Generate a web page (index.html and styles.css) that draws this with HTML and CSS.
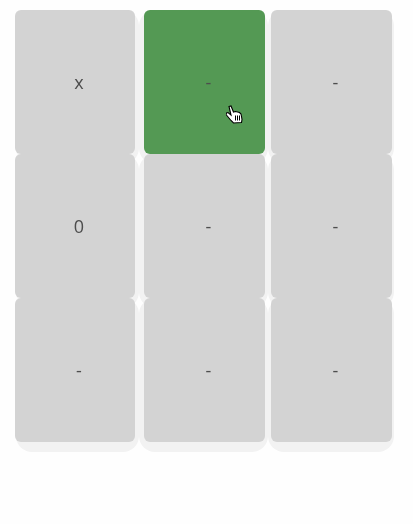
FILE: index.html
```html
<!DOCTYPE html>
<html lang="en">
<head>
  <meta charset="UTF-8" />
  <title>Tic Tac Toe</title>
  <link rel="stylesheet" href="styles.css">
</head>
<body>
  <div class="board">
    <div class="cell"><span class="mark">x</span></div>
    <div class="cell active"><span class="mark">-</span>
      <svg class="cursor" width="18" height="19" viewBox="0 0 18 19">
        <path d="M3 1.500l2-.5 2.500 6 2-.5 2 .5 2 .5 1.500 1.500.5 2.500.5 3-.5 3-8 .5-2.500-2.500-5-6 .5-1.500 1.500-.5 3 2.500z" fill="#fff" stroke="#000" stroke-width="1.100"/>
        <path d="M9.500 10.500v5M11.500 10.500v5M13.500 10.500v5" fill="none" stroke="#000" stroke-width="1"/>
      </svg>
    </div>
    <div class="cell"><span class="mark">-</span></div>
    <div class="cell"><span class="mark">0</span></div>
    <div class="cell"><span class="mark">-</span></div>
    <div class="cell"><span class="mark">-</span></div>
    <div class="cell"><span class="mark">-</span></div>
    <div class="cell"><span class="mark">-</span></div>
    <div class="cell"><span class="mark">-</span></div>
  </div>
</body>
</html>
```

FILE: styles.css
```css
body {
  margin: 0;
  min-height: 100vh;
  background: #fefefe;
  font-family: "Open Sans", sans-serif;
}
.board {
  position: relative;
  z-index: 0;
  display: grid;
  grid-template-columns: 129px 127px 121px;
  grid-auto-rows: 144px;
  padding: 10px 0 0 15px;
}
.cell {
  display: flex;
  align-items: center;
  justify-content: center;
  position: relative;
  box-sizing: border-box;
  width: 121px;
  padding-left: 8px;
  background: #d3d3d3;
  color: #4d4d4d;
  font-size: 18px;
  border-radius: 6px;
}
.mark {
  will-change: opacity;
}
/* soft band behind each card, wider than the card and more rounded */
.cell::after {
  content: "";
  position: absolute;
  top: 0;
  bottom: -10px;
  left: -5px;
  right: -3px;
  z-index: -1;
  background: #f2f2f2;
  border-radius: 16px;
}
.cell:nth-child(3n+1) {
  width: 120px;
}
.cell:nth-child(3n+1)::after {
  left: 1px;
  right: -4px;
}
.cell:nth-child(3n)::after {
  left: -3px;
  right: -2px;
}
.active {
  background: #549954;
}
.cursor {
  position: absolute;
  left: 82px;
  top: 95px;
}
```
